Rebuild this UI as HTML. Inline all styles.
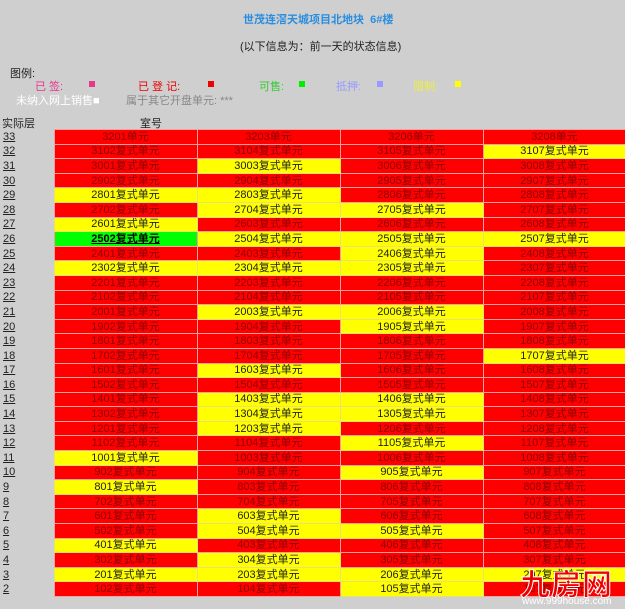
<!DOCTYPE html>
<html><head><meta charset="utf-8"><style>
body{margin:0;width:625px;height:609px;background:#cfcfcf;font-family:"Liberation Sans","Noto Sans CJK SC",sans-serif;font-size:11px;position:relative;overflow:hidden}
.a{position:absolute;white-space:nowrap}
table{position:absolute;left:0;top:129px;border-collapse:collapse;table-layout:fixed;width:626px}
td{height:13.6px;padding:0;text-align:center;border:1px solid #f4a0a0;font-size:11px;line-height:12px;overflow:hidden;white-space:nowrap}
td.l{border:none;background:transparent;text-align:left;padding-left:3px;text-decoration:underline;color:#222}
.R{background:#ff0000;color:#8a0000}
.Y{background:#ffff00;color:#222;border-color:#e8e070}
.G{background:#00ff00;color:#000;font-weight:bold;text-decoration:underline}
</style></head><body>
<div class="a" style="left:243px;top:11px;color:#2a8ee0;font-weight:bold">世茂连滘天城项目北地块&nbsp; 6#楼</div>
<div class="a" style="left:240px;top:38px;color:#222">(以下信息为：前一天的状态信息)</div>
<div class="a" style="left:10px;top:65px;color:#222">图例:</div>
<div class="a" style="left:35px;top:78px;color:#e8368a">已 签:</div>
<div class="a" style="left:89px;top:81px;width:6px;height:6px;background:#e8368a"></div>
<div class="a" style="left:138px;top:78px;color:#e00">已 登 记:</div>
<div class="a" style="left:208px;top:81px;width:6px;height:6px;background:#e00"></div>
<div class="a" style="left:259px;top:78px;color:#3c3">可售:</div>
<div class="a" style="left:299px;top:81px;width:6px;height:6px;background:#0e0"></div>
<div class="a" style="left:336px;top:78px;color:#99f">抵押:</div>
<div class="a" style="left:377px;top:81px;width:6px;height:6px;background:#99f"></div>
<div class="a" style="left:413px;top:78px;color:#ee4">限制:</div>
<div class="a" style="left:455px;top:81px;width:6px;height:6px;background:#ff0"></div>
<div class="a" style="left:16px;top:92px;color:#fff">未纳入网上销售■</div>
<div class="a" style="left:126px;top:92px;color:#888">属于其它开盘单元: ***</div>
<div class="a" style="left:2px;top:115px;color:#222">实际层</div>
<div class="a" style="left:140px;top:115px;color:#222">室号</div>
<table>
<colgroup><col style="width:54px"><col style="width:143px"><col style="width:143px"><col style="width:143px"><col style="width:143px"></colgroup>
<tbody id="tb"></tbody></table>
<div class="a" style="left:520px;top:560px;font-size:30px;font-weight:bold;color:#e00;-webkit-text-stroke:1px #fff;letter-spacing:1px">九房网</div>
<div class="a" style="left:522px;top:596px;font-size:10px;color:#fff">www.999house.com</div>
<script>
var d=[
[33,"3201单元R","3203单元R","3206单元R","3208单元R"],
[32,"3102R","3104R","3105R","3107Y"],
[31,"3001R","3003Y","3006R","3008R"],
[30,"2902R","2904R","2905R","2907R"],
[29,"2801Y","2803Y","2806R","2808R"],
[28,"2702R","2704Y","2705Y","2707R"],
[27,"2601Y","2603R","2606R","2608R"],
[26,"2502G","2504Y","2505Y","2507Y"],
[25,"2401R","2403R","2406Y","2408R"],
[24,"2302Y","2304Y","2305Y","2307R"],
[23,"2201R","2203R","2206R","2208R"],
[22,"2102R","2104R","2105R","2107R"],
[21,"2001R","2003Y","2006Y","2008R"],
[20,"1902R","1904R","1905Y","1907R"],
[19,"1801R","1803R","1806R","1808R"],
[18,"1702R","1704R","1705R","1707Y"],
[17,"1601R","1603Y","1606R","1608R"],
[16,"1502R","1504R","1505R","1507R"],
[15,"1401R","1403Y","1406Y","1408R"],
[14,"1302R","1304Y","1305Y","1307R"],
[13,"1201R","1203Y","1206R","1208R"],
[12,"1102R","1104R","1105Y","1107R"],
[11,"1001Y","1003R","1006R","1008R"],
[10,"902R","904R","905Y","907R"],
[9,"801Y","803R","806R","808R"],
[8,"702R","704R","705R","707R"],
[7,"601R","603Y","606R","608R"],
[6,"502R","504Y","505Y","507R"],
[5,"401Y","403R","406R","408R"],
[4,"302R","304Y","305R","307R"],
[3,"201Y","203Y","206Y","207Y"],
[2,"102R","104R","105Y","107R"]];
var h="";
d.forEach(function(r){h+='<tr><td class="l">'+r[0]+'</td>';
for(var i=1;i<5;i++){var s=r[i],c=s.slice(-1),t=s.slice(0,-1);if(t.indexOf("单元")<0)t+="复式单元";h+='<td class="'+c+'">'+t+'</td>';}
h+='</tr>';});
document.getElementById("tb").innerHTML=h;
</script>
</body></html>
